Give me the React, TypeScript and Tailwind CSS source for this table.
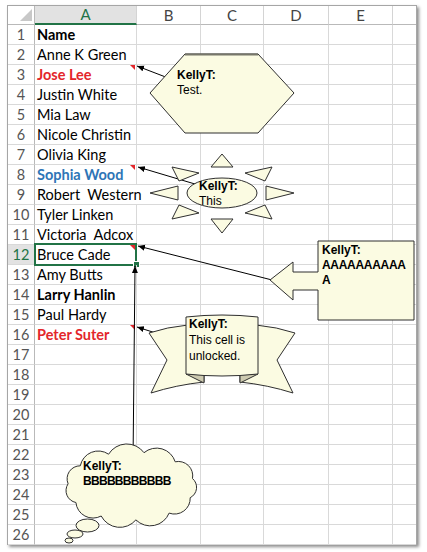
import React from "react";

type Row = { text: string; cls: string; note?: boolean };

const rows: Row[] = [
  { text: "Name", cls: "font-bold text-black" },
  { text: "Anne K Green", cls: "text-black" },
  { text: "Jose Lee", cls: "font-bold text-[#e3262b]", note: true },
  { text: "Justin White", cls: "text-black" },
  { text: "Mia Law", cls: "text-black" },
  { text: "Nicole Christin", cls: "text-black" },
  { text: "Olivia King", cls: "text-black" },
  { text: "Sophia Wood", cls: "font-bold text-[#2e75b6]", note: true },
  { text: "Robert  Western", cls: "text-black" },
  { text: "Tyler Linken", cls: "text-black" },
  { text: "Victoria  Adcox", cls: "text-black" },
  { text: "Bruce Cade", cls: "text-black", note: true },
  { text: "Amy Butts", cls: "text-black" },
  { text: "Larry Hanlin", cls: "font-bold text-black" },
  { text: "Paul Hardy", cls: "text-black" },
  { text: "Peter Suter", cls: "font-bold text-[#e3262b]", note: true },
];

const colLetters = ["B", "C", "D", "E", ""];

// cloud outline: arcs bulging out between points on an ellipse
function cloudPath(cx: number, cy: number, rx: number, ry: number, n: number) {
  const pts: [number, number][] = [];
  for (let i = 0; i < n; i++) {
    const a = (i / n) * Math.PI * 2 + 0.35;
    pts.push([cx + rx * Math.cos(a), cy + ry * Math.sin(a)]);
  }
  let d = `M${pts[0][0].toFixed(1)},${pts[0][1].toFixed(1)}`;
  for (let i = 0; i < n; i++) {
    const q = pts[i];
    const p = pts[(i + 1) % n];
    const r = Math.hypot(p[0] - q[0], p[1] - q[1]) * 0.6;
    d += ` A${r.toFixed(1)},${r.toFixed(1)} 0 0 1 ${p[0].toFixed(1)},${p[1].toFixed(1)}`;
  }
  return d + " Z";
}

const FILL = "#fbfbe2";
const STROKE = "#2f2f2f";

function Shapes() {
  return (
    <svg
      className="absolute left-0 top-0 pointer-events-none z-10"
      width="427"
      height="552"
      viewBox="0 0 427 552"
    >
      <defs>
        <marker
          id="ah"
          markerWidth="8"
          markerHeight="8"
          refX="7"
          refY="4"
          orient="auto"
          markerUnits="userSpaceOnUse"
        >
          <path d="M0,1 L7,4 L0,7 Z" fill="#000" />
        </marker>
      </defs>

      {/* arrows from comments to cells */}
      <g stroke="#000" strokeWidth="1" markerEnd="url(#ah)">
        <line x1="176" y1="81" x2="137" y2="66" />
        <line x1="205" y1="187" x2="138" y2="167" />
        <line x1="276" y1="281" x2="138" y2="246" />
        <line x1="162" y1="335" x2="137" y2="327" />
        <line x1="133" y1="462" x2="135" y2="266" />
      </g>

      {/* hexagon */}
      <path
        d="M185,54 L258,54 L294,93 L258,133 L185,133 L150,93 Z"
        fill={FILL}
        stroke={STROKE}
      />
      <line x1="185" y1="54.5" x2="258" y2="54.5" stroke="#77776a" strokeWidth="2" />

      {/* sun */}
      <g fill={FILL} stroke={STROKE} strokeLinejoin="miter">
        <polygon points="222,154 211,167 233,167" />
        <polygon points="222,233 211,219 233,219" />
        <polygon points="150,193 178,186 178,200" />
        <polygon points="294,193 266,186 266,200" />
        <polygon points="172,167 199,173 179,181" />
        <polygon points="272,167 245,173 265,181" />
        <polygon points="172,219 199,213 179,205" />
        <polygon points="272,219 245,213 265,205" />
        <ellipse cx="222" cy="193" rx="35" ry="15" />
      </g>

      {/* left arrow callout */}
      <path
        d="M318,241 L414,241 L414,320 L318,320 L318,290 L293,290 L293,300 L270,280 L293,262 L293,272 L318,272 Z"
        fill={FILL}
        stroke={STROKE}
      />

      {/* ribbon */}
      <g stroke={STROKE} strokeLinejoin="miter">
        <path
          d="M188,325 Q167,327 149,333 L167,360 L151,393 Q176,385 204,382 L204,374 Z"
          fill={FILL}
        />
        <path
          d="M256,325 Q277,327 295,333 L277,360 L293,393 Q268,385 240,382 L240,374 Z"
          fill={FILL}
        />
        <path d="M186,374 L204,374 L204,383 Z" fill="#cdcab0" />
        <path d="M258,374 L240,374 L240,383 Z" fill="#cdcab0" />
        <path
          d="M186,317 Q222,313 258,317 L258,374 Q222,378 186,374 Z"
          fill={FILL}
        />
      </g>

      {/* cloud */}
      <g fill={FILL} stroke={STROKE}>
        <path d={cloudPath(131, 486, 63, 34, 11)} />
        <ellipse cx="87.5" cy="525.5" rx="11.5" ry="6.5" />
        <ellipse cx="75" cy="534" rx="8" ry="4" />
        <ellipse cx="69" cy="540.5" rx="4" ry="2.5" />
      </g>
    </svg>
  );
}

function Note({
  left,
  top,
  lh,
  lines,
  tight,
}: {
  left: number;
  top: number;
  lh: string;
  lines: React.ReactNode;
  tight?: boolean;
}) {
  return (
    <div
      className={`absolute z-20 whitespace-pre text-[12px] text-black font-['Liberation_Sans',Arial,sans-serif] ${lh} ${
        tight ? "tracking-[-0.6px]" : ""
      }`}
      style={{ left, top }}
    >
      {lines}
    </div>
  );
}

function Notes() {
  return (
    <>
      <Note
        left={177}
        top={68}
        lh="leading-[15px]"
        lines={
          <>
            <div className="font-bold">KellyT:</div>
            <div>Test.</div>
          </>
        }
      />
      <Note
        left={199}
        top={179}
        lh="leading-[15px]"
        lines={
          <>
            <div className="font-bold">KellyT:</div>
            <div>This</div>
          </>
        }
      />
      <Note
        left={322}
        top={243}
        lh="leading-[15px]"
        lines={
          <>
            <div className="font-bold">KellyT:</div>
            <div className="font-bold tracking-[-0.3px]">AAAAAAAAAA</div>
            <div className="font-bold">A</div>
          </>
        }
      />
      <Note
        left={189}
        top={316}
        lh="leading-[16px]"
        lines={
          <>
            <div className="font-bold">KellyT:</div>
            <div>This cell is</div>
            <div>unlocked.</div>
          </>
        }
      />
      <Note
        left={83}
        top={459}
        lh="leading-[15px]"
        lines={
          <>
            <div className="font-bold">KellyT:</div>
            <div className="font-bold tracking-[-0.7px]">BBBBBBBBBBB</div>
          </>
        }
      />
    </>
  );
}

function HeaderRow() {
  return (
    <>
      <div className="relative h-[19px] border-r border-b border-[#b9b9b9] bg-white">
        <svg className="absolute left-[12px] top-[3px]" width="12" height="12">
          <polygon points="12,0 12,12 0,12" fill="#c8c8c8" />
        </svg>
      </div>
      <div className="h-[19px] flex items-center justify-center bg-[#e2e2e2] border-r border-[#d4d4d4] border-b-2 border-b-[#217346] text-[#217346] text-[15px]">
        A
      </div>
      {colLetters.map((c, i) => (
        <div
          key={i}
          className={`h-[19px] flex items-center justify-center bg-white border-b border-b-[#b9b9b9] text-[#444] text-[15px] ${
            i < 4 ? "border-r border-r-[#d4d4d4]" : ""
          }`}
        >
          {c}
        </div>
      ))}
    </>
  );
}

function SheetRow({ n }: { n: number }) {
  const r = rows[n - 1];
  const selected = n === 12;
  const overflow = n === 9;
  return (
    <>
      <div
        className={`h-[20px] flex items-center justify-center border-r border-r-[#b9b9b9] border-b border-b-[#d9d9d9] text-[14.5px] ${
          selected ? "bg-[#e2e2e2] text-[#217346]" : "bg-white text-[#555]"
        }`}
      >
        {n}
      </div>
      <div
        className={`relative h-[20px] flex items-center pl-[2px] border-b border-[#d9d9d9] ${
          overflow ? "z-[5]" : "border-r"
        }`}
      >
        {r && <span className={`whitespace-pre text-[14.5px] ${r.cls}`}>{r.text}</span>}
        {r?.note && (
          <span className="absolute right-[1px] top-0 w-0 h-0 border-l-[5px] border-l-transparent border-t-[5px] border-t-[#e3262b]" />
        )}
        {selected && (
          <>
            <span className="absolute -left-[1px] -top-[2px] w-[103px] h-[23px] border-2 border-[#217346]" />
            <span className="absolute left-[98px] top-[16px] w-[7px] h-[7px] bg-[#217346] border border-white" />
          </>
        )}
      </div>
      {[0, 1, 2, 3, 4].map((i) => (
        <div
          key={i}
          className={`h-[20px] bg-white border-b border-[#d9d9d9] ${i < 4 ? "border-r" : ""}`}
        />
      ))}
    </>
  );
}

export default function App() {
  const nums = Array.from({ length: 26 }, (_, i) => i + 1);
  return (
    <div className="relative w-[427px] h-[552px] bg-white overflow-hidden pt-[5px] pl-[7px] font-['Lato','Liberation_Sans',sans-serif]">
      <div className="w-[410px] border-l border-t border-r border-[#a6a6a6] bg-white shadow-[2px_2px_3px_rgba(0,0,0,0.45)]">
        <div className="grid grid-cols-[27px_102px_64px_63px_65px_64px_1fr]">
          <HeaderRow />
          {nums.map((n) => (
            <SheetRow key={n} n={n} />
          ))}
        </div>
      </div>
      <Shapes />
      <Notes />
    </div>
  );
}
